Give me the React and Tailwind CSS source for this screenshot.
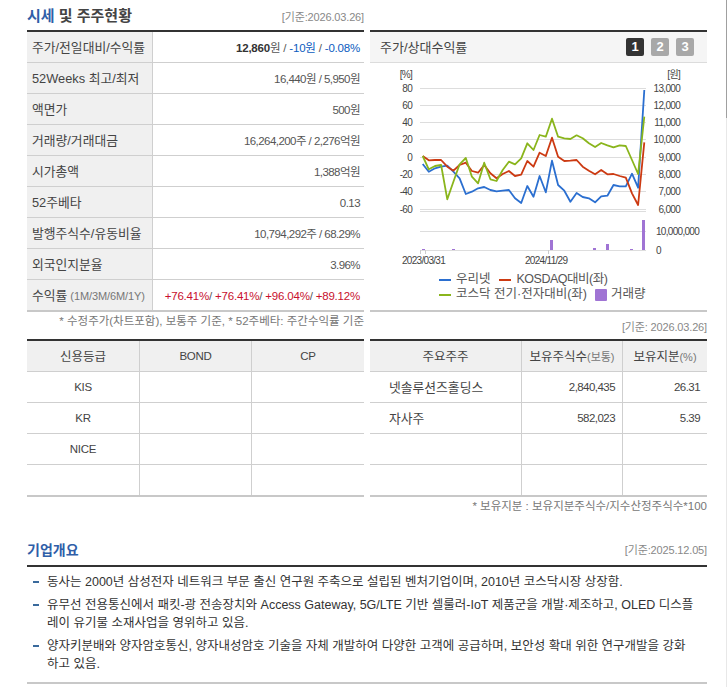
import React from "react";

const FONT = "[font-family:'Liberation_Sans','Noto_Sans_CJK_KR',sans-serif]";

const rows = [
  {
    label: "주가/전일대비/수익률",
    valueClass: "tracking-[-0.2px]",
    value: <><b className="text-[#333]">12,860</b>원 / <span className="text-[#0b5cc0]">-10원</span> / <span className="text-[#0b5cc0]">-0.08%</span></>,
  },
  { label: "52Weeks 최고/최저", value: "16,440원 / 5,950원" },
  { label: "액면가", value: "500원" },
  { label: "거래량/거래대금", value: "16,264,200주 / 2,276억원" },
  { label: "시가총액", value: "1,388억원" },
  { label: "52주베타", value: "0.13" },
  { label: "발행주식수/유동비율", value: "10,794,292주 / 68.29%" },
  { label: "외국인지분율", value: "3.96%" },
  {
    label: <>수익률<span className="ml-[3px] text-[11px] text-[#777] tracking-[-0.1px]">(1M/3M/6M/1Y)</span></>,
    valueClass: "tracking-[-0.2px]",
    value: <span className="text-[#c8102e]">+76.41%<span className="text-[#555]">/</span> +76.41%<span className="text-[#555]">/</span> +96.04%<span className="text-[#555]">/</span> +89.12%</span>,
  },
];

const credit = ["KIS", "KR", "NICE", ""];

const holders = [
  ["넷솔루션즈홀딩스", "2,840,435", "26.31"],
  ["자사주", "582,023", "5.39"],
  ["", "", ""],
  ["", "", ""],
];

// y values read off the chart, one per week tick
const blue = [282, 305, 295, 290, 287, 305, 325, 372, 365, 355, 351, 360, 364, 362, 360, 385, 399, 348, 380, 318, 367, 272, 345, 362, 395, 369, 381, 385, 397, 379, 377, 345, 349, 349, 311, 353, 60];
const red = [258, 271, 270, 270, 290, 302, 285, 278, 303, 308, 285, 310, 325, 312, 303, 318, 314, 273, 290, 248, 258, 203, 260, 273, 272, 270, 290, 302, 313, 300, 313, 312, 318, 323, 370, 405, 217];
const green = [258, 298, 288, 285, 388, 335, 283, 264, 320, 340, 278, 328, 333, 300, 275, 283, 265, 220, 240, 195, 200, 146, 200, 205, 207, 196, 205, 220, 231, 219, 226, 232, 226, 228, 270, 312, 140];

const toPoints = (ys) =>
  ys.map((y, i) => `${(400 + (68 + 18.47 * i) / 3).toFixed(1)},${(70 + y / 3).toFixed(1)}`).join(" ");

const leftAxis = [["80", 88], ["60", 105], ["40", 122], ["20", 139], ["0", 157], ["-20", 174], ["-40", 191], ["-60", 209]];
const rightAxis = [["13,000", 88], ["12,000", 105], ["11,000", 122], ["10,000", 139], ["9,000", 157], ["8,000", 174], ["7,000", 191], ["6,000", 209]];
const bars = [[422, 249], [452, 249], [550, 240], [593, 248], [606, 244], [630, 249], [642, 220]];

const Chart = () => (
  <svg viewBox="370 63 337 207" className="block w-[337px] h-[207px]" fontFamily="'Liberation Sans', 'Noto Sans CJK KR', sans-serif">
    {[...leftAxis.map((a) => a[1]), 211, 231, 250].map((y) => (
      <line key={y} x1="420" x2="646" y1={y + 0.5} y2={y + 0.5} stroke="#dddddd" />
    ))}
    <path d="M420.5 250v4M425.5 250v4M548.5 250v4" stroke="#cccccc" fill="none" />
    {bars.map(([x, y]) => (
      <rect key={x} x={x} y={y} width="3" height={250 - y} fill="#a074d4" />
    ))}
    <polyline points={toPoints(blue)} fill="none" stroke="#2b6fd0" strokeWidth="1.8" strokeLinejoin="round" />
    <polyline points={toPoints(red)} fill="none" stroke="#cc3a12" strokeWidth="1.8" strokeLinejoin="round" />
    <polyline points={toPoints(green)} fill="none" stroke="#8ab51c" strokeWidth="1.8" strokeLinejoin="round" />
    <g fontSize="10" fill="#444" letterSpacing="-0.7">
      <text x="412" y="78" textAnchor="end">[%]</text>
      <text x="680" y="78" textAnchor="end">[원]</text>
      {leftAxis.map(([t, y]) => (
        <text key={t} x="412" y={y + 3.5} textAnchor="end">{t}</text>
      ))}
      {rightAxis.map(([t, y]) => (
        <text key={t} x="680" y={y + 3.5} textAnchor="end">{t}</text>
      ))}
      <text x="656" y="235">10,000,000</text>
      <text x="656" y="253.5">0</text>
      <text x="402" y="264">2023/03/31</text>
      <text x="525" y="264">2024/11/29</text>
    </g>
  </svg>
);

const Dash = ({ color }) => <span className={`w-3 h-[2px] ${color}`} />;

const App = () => {
  return (
    <div className={`${FONT} relative w-full h-[687px] overflow-hidden bg-white text-[12px] text-[#444] pl-[27px] pr-[20px]`}>
      {/* 시세 + 차트 */}
      <div className="flex gap-[6px]">
        <div className="w-[337px]">
          <div className="h-[30px] flex items-center justify-between pt-[2px]">
            <h2 className="text-[15px] font-bold text-[#444]"><span className="text-[#2f5ea8]">시세</span> 및 주주현황</h2>
            <span className="text-[11px] tracking-[-0.15px] text-[#888] pt-[2px]">[기준:2026.03.26]</span>
          </div>
          <div className="border-t-2 border-b-2 border-t-[#333] border-b-[#c8c8c8]">
            {rows.map((r, i) => (
              <div key={i} className={`flex ${i < rows.length - 1 ? "h-[31px] border-b border-[#cfcfcf]" : "h-[30px]"}`}>
                <div className="w-[126px] shrink-0 bg-[#f0f0f0] border-r border-[#cfcfcf] pl-[5px] pt-[2px] flex items-center text-[12.8px] text-[#444] whitespace-nowrap">{r.label}</div>
                <div className={`flex-1 pr-[4px] pt-[3px] flex items-center justify-end text-[11.5px] text-[#555] whitespace-pre ${r.valueClass || "tracking-[-0.55px]"}`}>{r.value}</div>
              </div>
            ))}
          </div>
          <p className="h-[27px] pt-[1px] text-right text-[11.5px] text-[#777] leading-[16px] whitespace-nowrap">* 수정주가(차트포함), 보통주 기준, * 52주베타: 주간수익률 기준</p>
          <div className="border-t-2 border-b-2 border-t-[#333] border-b-[#c8c8c8]">
            <div className="grid grid-cols-[112px_112px_113px] h-[31px] bg-[#f0f0f0] border-b border-[#cfcfcf] text-center">
              <div className="flex items-center justify-center pt-[2px] text-[12.5px]">신용등급</div>
              <div className="flex items-center justify-center pt-[2px] border-l border-[#cfcfcf] text-[11.5px] tracking-[-0.3px]">BOND</div>
              <div className="flex items-center justify-center pt-[2px] border-l border-[#cfcfcf] text-[11.5px] tracking-[-0.3px]">CP</div>
            </div>
            {credit.map((c, i) => (
              <div key={i} className={`grid grid-cols-[112px_112px_113px] ${i < 3 ? "h-[31px] border-b border-[#cfcfcf]" : "h-[30px]"}`}>
                <div className="flex items-center justify-center pt-[1px] text-[11.5px] tracking-[-0.3px]">{c}</div>
                <div className="border-l border-[#cfcfcf]" />
                <div className="border-l border-[#cfcfcf]" />
              </div>
            ))}
          </div>
        </div>

        <div className="w-[337px] pt-[30px]">
          <div className="border-t-2 border-b-2 border-t-[#333] border-b-[#c8c8c8]">
            <div className="h-[31px] flex items-center justify-between bg-[#f5f5f5] border-b border-[#dcdcdc] pl-[10px] pr-[12px]">
              <span className="text-[13px] pt-[2px]">주가/상대수익률</span>
              <div className="flex gap-[7px] mr-[1px] text-[13px] font-bold text-white">
                <span className="w-[18px] h-[18px] flex items-center justify-center rounded-[2px] bg-[#333]">1</span>
                <span className="w-[18px] h-[18px] flex items-center justify-center rounded-[2px] bg-[#a8a8a8]">2</span>
                <span className="w-[18px] h-[18px] flex items-center justify-center rounded-[2px] bg-[#a8a8a8]">3</span>
              </div>
            </div>
            <Chart />
            <div className="h-[40px] pt-[2px] pl-[69px] text-[12.5px] leading-[15px] text-[#555]">
              <div className="flex items-center h-[15px]">
                <Dash color="bg-[#2b6fd0]" />
                <span className="ml-[5px]">우리넷</span>
                <span className="ml-[8px]"><Dash color="block bg-[#cc3a12]" /></span>
                <span className="ml-[6px] tracking-[-0.5px]">KOSDAQ대비(좌)</span>
              </div>
              <div className="flex items-center h-[15px]">
                <Dash color="bg-[#8ab51c]" />
                <span className="ml-[5px]">코스닥 전기·전자대비(좌)</span>
                <span className="ml-[8px] w-3 h-3 bg-[#a074d4] rounded-[1px]" />
                <span className="ml-[4px]">거래량</span>
              </div>
            </div>
          </div>
          <p className="h-[27px] pt-[7px] text-right text-[11px] tracking-[-0.15px] text-[#888] leading-[16px]">[기준: 2026.03.26]</p>
          <div className="border-t-2 border-b-2 border-t-[#333] border-b-[#c8c8c8]">
            <div className="grid grid-cols-[151px_101px_85px] h-[31px] bg-[#f0f0f0] border-b border-[#cfcfcf] text-center text-[12.5px]">
              <div className="flex items-center justify-center pt-[2px]">주요주주</div>
              <div className="flex items-center justify-center pt-[2px] border-l border-[#cfcfcf]">보유주식수<span className="text-[11px] text-[#777]">(보통)</span></div>
              <div className="flex items-center justify-center pt-[2px] border-l border-[#cfcfcf]">보유지분<span className="text-[11px] text-[#777]">(%)</span></div>
            </div>
            {holders.map((h, i) => (
              <div key={i} className={`grid grid-cols-[151px_101px_85px] ${i < 3 ? "h-[31px] border-b border-[#cfcfcf]" : "h-[30px]"}`}>
                <div className="flex items-center pl-[19px] pt-[2px] text-[12.8px]">{h[0]}</div>
                <div className="flex items-center justify-end pr-[7px] pt-[2px] border-l border-[#cfcfcf] text-[11.5px] tracking-[-0.55px]">{h[1]}</div>
                <div className="flex items-center justify-end pr-[7px] pt-[2px] border-l border-[#cfcfcf] text-[11.5px] tracking-[-0.55px]">{h[2]}</div>
              </div>
            ))}
          </div>
          <p className="pt-[1px] text-right text-[11.5px] text-[#777] leading-[16px] whitespace-nowrap">* 보유지분 : 보유지분주식수/지수산정주식수*100</p>
        </div>
      </div>

      {/* 기업개요 */}
      <div className="mt-[22px]">
        <div className="h-[29px] flex items-center justify-between">
          <h2 className="text-[14px] font-bold text-[#2f5ea8]">기업개요</h2>
          <span className="text-[11px] tracking-[-0.15px] text-[#888]">[기준:2025.12.05]</span>
        </div>
        <ul className="border-t-2 border-t-[#333] border-b-2 border-b-[#c8c8c8] pt-[6px] pb-[9px] flex flex-col gap-[5px] text-[12.5px] leading-[18px] text-[#333]">
          <li className="flex">
            <span className="w-[6px] h-[2px] mt-[8px] ml-[6px] mr-[8px] shrink-0 bg-[#3a6a9c]" />
            <span>동사는 2000년 삼성전자 네트워크 부문 출신 연구원 주축으로 설립된 벤처기업이며, 2010년 코스닥시장 상장함.</span>
          </li>
          <li className="flex">
            <span className="w-[6px] h-[2px] mt-[8px] ml-[6px] mr-[8px] shrink-0 bg-[#3a6a9c]" />
            <span>유무선 전용통신에서 패킷-광 전송장치와 Access Gateway, 5G/LTE 기반 셀룰러-IoT 제품군을 개발·제조하고, OLED 디스플<br />레이 유기물 소재사업을 영위하고 있음.</span>
          </li>
          <li className="flex">
            <span className="w-[6px] h-[2px] mt-[8px] ml-[6px] mr-[8px] shrink-0 bg-[#3a6a9c]" />
            <span>양자키분배와 양자암호통신, 양자내성암호 기술을 자체 개발하여 다양한 고객에 공급하며, 보안성 확대 위한 연구개발을 강화<br />하고 있음.</span>
          </li>
        </ul>
      </div>

      {/* 스크롤 영역 가장자리 */}
      <div className="absolute right-0 top-0 w-px h-full bg-[#e8e8e8]" />
      <div className="absolute right-0 top-0 w-px h-[118px] bg-[#a0a0a0]" />
    </div>
  );
};

export default App;
